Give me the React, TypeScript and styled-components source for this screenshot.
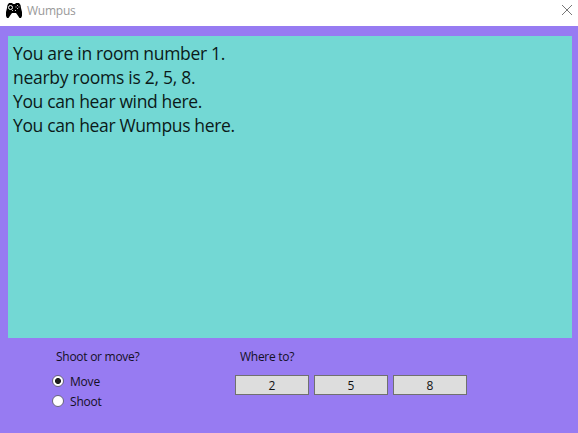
import React, { useState } from "react";
import styled, { createGlobalStyle } from "styled-components";

const GlobalStyle = createGlobalStyle`
  * { box-sizing: border-box; }
  body { margin: 0; overflow: hidden; background: #977bf2; }
`;

const Window = styled.main`
  display: flex;
  flex-direction: column;
  width: 578px;
  height: 433px;
  background: #977bf2;
  color: #141026;
  font: 12px/16px "Open Sans", "Noto Sans", sans-serif;
`;

const TitleBar = styled.header`
  display: flex;
  align-items: flex-start;
  height: 26px;
  flex: none;
  padding: 2px 5px 0 6px;
  background: #fff;
`;

const Title = styled.h1`
  flex: 1;
  margin: 1px 0 0 5px;
  font-size: 12px;
  font-weight: 400;
  letter-spacing: -0.25px;
  line-height: 16px;
  color: #999;
`;

const CloseButton = styled.button`
  display: flex;
  margin: 2px 0 0;
  padding: 0;
  border: 0;
  background: none;
`;

const Log = styled.section`
  height: 302px;
  flex: none;
  margin: 10px 6px 0 8px;
  padding: 5px;
  background: #73d8d4;
`;

const LogLine = styled.p<{ $spacing: number }>`
  margin: 0;
  font-size: 17.5px;
  line-height: 24px;
  letter-spacing: ${(p) => p.$spacing}px;
  white-space: nowrap;
  color: #0b1a19;
`;

const Controls = styled.section`
  display: grid;
  grid-template-columns: 183px auto;
  justify-content: start;
  padding: 11px 0 0 52px;
`;

const Group = styled.div`
  display: flex;
  flex-direction: column;
`;

const Label = styled.div<{ $indent: number }>`
  padding-left: ${(p) => p.$indent}px;
  letter-spacing: -0.27px;
`;

const RadioRow = styled.label<{ $first?: boolean }>`
  display: flex;
  align-items: center;
  gap: 6px;
  height: 20px;
  margin-top: ${(p) => (p.$first ? 6 : 0)}px;
  letter-spacing: -0.2px;
`;

const RadioText = styled.span`
  padding-top: 2px;
`;

const Radio = styled.input`
  appearance: none;
  width: 12px;
  height: 12px;
  margin: 0;
  border: 1px solid #67637c;
  border-radius: 50%;
  background: #fff;
  &:checked {
    background: radial-gradient(circle, #1d1d1d 2.6px, #fff 3.4px);
  }
`;

const Buttons = styled.div`
  display: flex;
  gap: 5px;
  margin-top: 10px;
`;

const RoomButton = styled.button`
  width: 74px;
  height: 20px;
  padding: 1px 0 0;
  border: 1px solid #707070;
  background: #ddd;
  color: #111;
  font: inherit;
  line-height: 18px;
`;

const GamepadIcon = () => (
  <svg width="16" height="16" viewBox="0 0 16 16">
    <path
      d="M3 1h3l1 1h2l1-1h3l1.500 2 .5 3 1 4v4l-1 2h-1.500l-2-3-1.500-2h-4L4.500 13l-2 3H1l-1-2v-4l1-4 .5-3Z"
      fill="#000"
    />
    <circle cx="4.500" cy="5.500" r="2" fill="none" stroke="#fff" strokeWidth="1" />
    <path d="M11 3h1v1h-1zM11 6h1v1h-1zM9.500 4.500h1v1h-1zM12.500 4.500h1v1h-1zM6 8h1v1H6zM9 8h1v1H9z" fill="#ccc" />
  </svg>
);

const CloseIcon = () => (
  <svg width="12" height="12" viewBox="0 0 12 12">
    <path d="M1 1l10 10M11 1L1 11" fill="none" stroke="#777" strokeWidth="1" />
  </svg>
);

const messages = [
  { text: "You are in room number 1.", spacing: -0.32 },
  { text: "nearby rooms is 2, 5, 8.", spacing: -0.27 },
  { text: "You can hear wind here.", spacing: -0.35 },
  { text: "You can hear Wumpus here.", spacing: -0.35 },
];

export default function App() {
  const [action, setAction] = useState("Move");
  return (
    <Window>
      <GlobalStyle />
      <TitleBar>
        <GamepadIcon />
        <Title>Wumpus</Title>
        <CloseButton aria-label="Close">
          <CloseIcon />
        </CloseButton>
      </TitleBar>
      <Log>
        {messages.map((m) => (
          <LogLine key={m.text} $spacing={m.spacing}>{m.text}</LogLine>
        ))}
      </Log>
      <Controls>
        <Group>
          <Label $indent={4}>Shoot or move?</Label>
          {["Move", "Shoot"].map((name, i) => (
            <RadioRow key={name} $first={i === 0}>
              <Radio type="radio" name="action" checked={action === name} onChange={() => setAction(name)} />
              <RadioText>{name}</RadioText>
            </RadioRow>
          ))}
        </Group>
        <Group>
          <Label $indent={5}>Where to?</Label>
          <Buttons>
            {[2, 5, 8].map((room) => (
              <RoomButton key={room}>{room}</RoomButton>
            ))}
          </Buttons>
        </Group>
      </Controls>
    </Window>
  );
}
